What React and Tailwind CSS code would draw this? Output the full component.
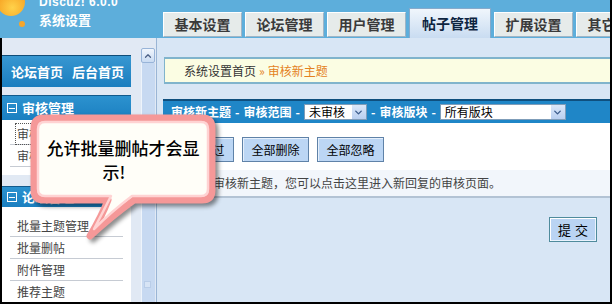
import React from "react";
import { ChevronDown, ChevronUp } from "lucide-react";

function Tab({ label, active }) {
  if (active) {
    return (
      <div className="w-[82px] h-[30px] shrink-0 flex items-center justify-center border border-b-0 border-[#86aacb] bg-linear-to-b from-[#f0f6fc] to-[#c9dcf1] text-[14px] font-bold text-[#0d2440]">
        {label}
      </div>
    );
  }
  return (
    <div className="w-[79px] h-[25px] mb-[1px] flex items-center justify-center border border-[#9fb5c6] border-t-white border-l-white bg-[#e6ebea] text-[14px] font-bold text-[#3a3a3a] shrink-0">
      {label}
    </div>
  );
}

function SectionHeader({ label }) {
  return (
    <div className="flex items-center h-full pl-[5px] gap-[5px] text-white text-[13px] font-bold">
      <div className="w-[10px] h-[10px] border border-white flex items-center justify-center">
        <div className="w-[6px] h-[1px] bg-white" />
      </div>
      <span>{label}</span>
    </div>
  );
}

function Item({ label, focus }) {
  return (
    <div className="mx-[8px] h-[22px] border-b border-[#c6cbd3] pl-[7px] flex items-center text-[12px] text-[#444]">
      <span className={focus ? "outline-1 outline-dotted outline-[#555] outline-offset-[1px]" : ""}>{label}</span>
    </div>
  );
}

function Btn({ label }) {
  return (
    <div className="w-[67px] h-[25px] border border-[#5f82a8] bg-[#bcd6f4] flex items-center justify-center text-[12px] text-black shadow-[inset_1px_1px_0_#e6f0fc]">
      {label}
    </div>
  );
}

function Select({ label, width }) {
  return (
    <div className={`${width} h-[16px] bg-white border border-[#7f9db9] flex items-center shrink-0`}>
      <span className="flex-1 pl-[4px] text-[12px] leading-[14px] text-black font-normal">{label}</span>
      <div className="w-[14px] h-full bg-linear-to-b from-[#dbe7f8] to-[#b9cff0] flex items-center justify-center">
        <ChevronDown size={11} strokeWidth={3} color="#3c5c8c" />
      </div>
    </div>
  );
}

function Dash() {
  return <span className="mx-[4px]">-</span>;
}

export default function App() {
  return (
    <div className="w-[612px] h-[304px] relative overflow-hidden border-r-2 border-b-2 border-black bg-[#d8e6f5] font-['Noto_Sans_CJK_SC','Noto_Sans',sans-serif]">
      {/* header */}
      <div className="h-[38px] bg-[#5daedb] flex">
        <div className="w-[163px] shrink-0 flex">
          <svg width="36" height="30" viewBox="0 0 36 30" className="shrink-0">
            <defs>
              <radialGradient id="bal" cx="0.55" cy="0.7" r="0.7">
                <stop offset="0" stopColor="#ffd24a" />
                <stop offset="1" stopColor="#f59a1c" />
              </radialGradient>
            </defs>
            <circle cx="11" cy="2" r="14" fill="url(#bal)" />
            <circle cx="22" cy="24" r="3" fill="#f7a62a" />
          </svg>
          <div className="ml-[3px] flex flex-col text-white font-bold">
            <span className="text-[12px] leading-[14px] mt-[-5px] tracking-[0.5px] font-['Liberation_Sans',sans-serif]">Discuz! 6.0.0</span>
            <span className="text-[13px] leading-[16px] mt-[3px]">系统设置</span>
          </div>
        </div>
        <div className="flex items-end gap-[3px] self-end">
          <Tab label="基本设置" />
          <Tab label="论坛管理" />
          <Tab label="用户管理" />
          <Tab label="帖子管理" active />
          <Tab label="扩展设置" />
          <Tab label="其它设置" />
        </div>
      </div>

      {/* body */}
      <div className="h-[264px] flex border-l-2 border-black">
        {/* sidebar */}
        <div className="w-[139px] shrink-0 bg-[#e1e9f4] pt-[17px]">
          <div className="w-[129px] flex flex-col">
            <div className="h-[32px] border-t border-[#104d78] bg-linear-to-b from-[#3797d1] to-[#1a7ebf] flex items-center pl-[9px] text-white text-[13px] font-bold">
              <span>论坛首页</span>
              <span className="ml-[9px]">后台首页</span>
            </div>
            <div className="h-[25px] mt-[8px] border-t border-[#125a8c] bg-linear-to-b from-[#2c92cf] to-[#1a7fc0]">
              <SectionHeader label="审核管理" />
            </div>
            <div className="bg-white pt-[3px] pb-[8px]">
              <Item label="审核新主题" focus />
              <Item label="审核新回复" />
            </div>
            <div className="h-[21px] mt-[11px] border-t border-[#125a8c] bg-linear-to-b from-[#2c92cf] to-[#1a7fc0]">
              <SectionHeader label="论坛管理" />
            </div>
            <div className="bg-white pt-[8px] h-[120px]">
              <Item label="批量主题管理" />
              <Item label="批量删帖" />
              <Item label="附件管理" />
              <Item label="推荐主题" />
            </div>
          </div>
        </div>

        {/* scrollbar */}
        <div className="w-[15px] shrink-0 bg-[#e1e9f4] pt-[10px] pr-[1px] flex flex-col">
          <div className="h-[15px] border border-[#98b4d8] rounded-[2px] bg-linear-to-b from-[#f1f6fd] to-[#c9dbf2] flex items-center justify-center">
            <ChevronUp size={10} strokeWidth={3} color="#4d6185" />
          </div>
          <div className="flex-1 bg-[#c7d9f1] border-l border-[#eef4fb] flex flex-col justify-end pb-[14px] pl-[2px]">
            <div className="w-[7px] h-[7px] bg-[#d7e4f5] border border-[#b9cde8]" />
          </div>
        </div>
        <div className="w-[1px] shrink-0 bg-[#9ab5d5]" />

        {/* content */}
        <div className="flex-1 min-w-0 pl-[6px] pt-[19px] flex flex-col">
          <div className="h-[27px] ml-[1px] border-y-2 border-l border-[#80b4cc] bg-[#fbfde3] flex items-center pl-[19px] text-[12px]">
            <span className="text-[#333]">系统设置首页</span>
            <span className="text-[#e4821f] mx-[3px]">»</span>
            <span className="text-[#e4821f]">审核新主题</span>
          </div>

          <div className="mt-[15px] h-[24px] border-t-2 border-[#0f4f7e] bg-[#1f86c7] flex items-center pl-[8px] text-white text-[12px] font-bold whitespace-nowrap">
            <span>审核新主题</span>
            <Dash />
            <span>审核范围</span>
            <Dash />
            <Select label="未审核" width="w-[63px]" />
            <Dash />
            <span>审核版块</span>
            <Dash />
            <Select label="所有版块" width="w-[126px]" />
          </div>

          <div className="h-[47px] bg-white pl-[4px] pt-[14px] flex gap-[8px]">
            <Btn label="全部通过" />
            <Btn label="全部删除" />
            <Btn label="全部忽略" />
          </div>

          <div className="h-[28px] bg-[#f2f6fb] border-b-2 border-[#b3c3d4] pl-[14px] flex items-center text-[12px] text-[#444] whitespace-nowrap">
            当前为审核新主题，您可以点击这里进入新回复的审核页面。
          </div>

          <div className="flex justify-end pr-[13px] pt-[19px]">
            <div className="w-[48px] h-[25px] border border-[#4f8b9c] bg-[#bad4f3] shadow-[inset_1px_1px_0_#ffffff,inset_-1px_-1px_0_#eaf3fd] flex items-center justify-center text-[13px] text-black tracking-[4px] pl-[4px]">
              提交
            </div>
          </div>
        </div>
      </div>

      {/* callout */}
      <svg
        width="195"
        height="132"
        viewBox="0 0 195 132"
        className="absolute left-[28px] top-[112px] drop-shadow-[3px_3px_2px_rgba(0,0,0,0.45)]"
      >
        <path
          d="M16 6 H174 Q184 6 184 16 V78 Q184 88 174 88 H106 Q84 104 62 124 Q74 104 80 88 H16 Q6 88 6 78 V16 Q6 6 16 6 Z"
          fill="#fffef8"
          stroke="#f59898"
          strokeWidth="7"
          strokeLinejoin="round"
        />
        <path
          d="M17 10 H173 Q180 10 180 17 V77 Q180 84 173 84 H104 Q83 100 66 117 Q75 100 83 84 H17 Q10 84 10 77 V17 Q10 10 17 10 Z"
          fill="none"
          stroke="#ffd3d3"
          strokeWidth="2.5"
          strokeLinejoin="round"
        />
      </svg>
      <div className="absolute left-[40px] top-[136px] w-[166px] text-[17px] leading-[24px] font-medium text-black">
        <div className="text-center whitespace-nowrap">允许批量删帖才会显</div>
        <div className="text-center pr-[18px]">示!</div>
      </div>
    </div>
  );
}
